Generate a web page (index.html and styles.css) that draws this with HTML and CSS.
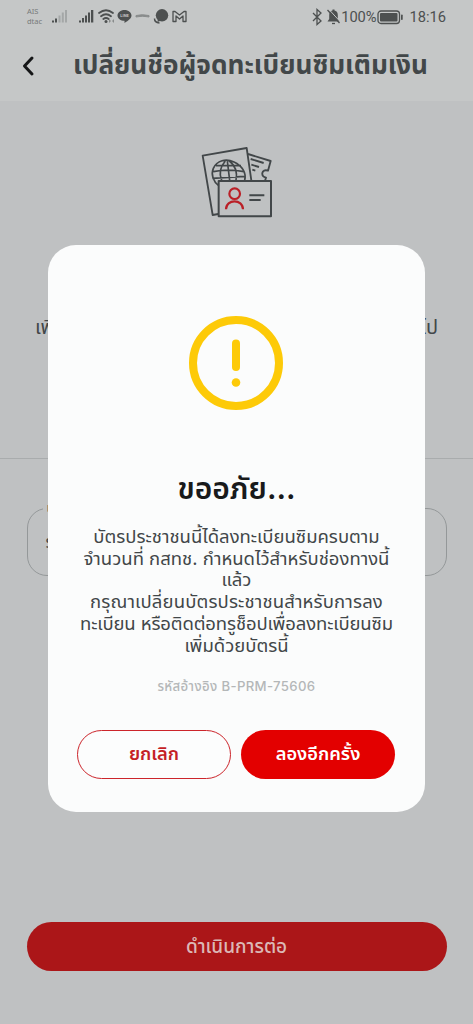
FILE: index.html
```html
<!DOCTYPE html>
<html lang="th">
<head>
<meta charset="utf-8">
<title>เปลี่ยนชื่อผู้จดทะเบียนซิมเติมเงิน</title>
<link rel="stylesheet" href="styles.css">
</head>
<body>
<div class="screen">
  <header class="top">
    <div class="status">
      <div class="carriers"><span>AIS</span><span>dtac</span></div>
      <svg class="status-icons" width="140" height="20" viewBox="0 0 140 20" fill="#4d5050">
        <path d="M4 14.500h2v2H4zM7 12.500h2v4h-2z"/>
        <path d="M10.500 9.500h2v7h-2zM13.800 6.500h2v10h-2zM17 4h2v12.500h-2z" fill="#a4a7a7"/>
        <path d="M31 14.500h2v2h-2zM34 12h2v4.500h-2zM37 9.500h2v7h-2zM40 6.500h2v10h-2zM43 4h2.300v12.500h-2.300z"/>
        <g fill="none" stroke="#4d5050" stroke-width="1.800" stroke-linecap="round"><path d="M51 7q7-5.500 14 0M53 10.200q5-4 10 0M55.300 13q2.700-2 5.400 0"/></g>
        <circle cx="58" cy="15.500" r="1.500"/><path d="M61 13l2 2-2 2zM66 13l-2 2 2 2z" fill="#888b8b"/>
        <path d="M76.500 4c4 0 7 2.500 7 5.500 0 2.700-3 5-7 7.500v-2.200c-4 0-7-2.300-7-5.300S72.500 4 76.500 4z"/>
        <text class="line-logo" x="76.500" y="11" text-anchor="middle">LINE</text>
        <path d="M88 11V9.500q6-1.500 13 0V11l-3-.4q-4-.7-7 0z" fill="#898c8c" stroke="#898c8c"/>
        <circle cx="114" cy="9.300" r="6.200"/><path d="M110 12l-.5 4 5-2z"/><path d="M106.500 12.500q0 4 5 4.500" fill="none" stroke="#4d5050" stroke-width="1.500"/>
        <path d="M125 15.500v-10h2l4.500 3.500 4.500-3.500h2v10h-3v-5.500l-3.500 3-3.500-3v5.500z" fill="none" stroke="#4d5050" stroke-width="1.300" stroke-linejoin="round"/>
      </svg>
      <div class="status-right">
        <svg width="30" height="18" viewBox="0 0 30 18" fill="none" stroke="#4d5050" stroke-width="1.300">
          <path d="M2 5l8 8-4 3.500V1.500L10 5l-8 8"/>
          <path d="M16.500 13.500h12l-1.700-2.500V7c0-3-1.500-4-3.300-4.500V1.500h-2V2.500C19.500 3 18.200 4.500 18.200 7v4z" fill="#4d5050" stroke="none"/><path d="M21 15.500h3"/>
          <path d="M18 1.500l11 12" stroke="#c5c7c7" stroke-width="1"/><path d="M16.500 2l12 13"/>
        </svg>
        <span class="percent">100%</span>
        <svg class="battery" width="27" height="15" viewBox="0 0 27 15"><rect x="1" y="1" width="21.500" height="12.500" rx="3" fill="none" stroke="#4d5050" stroke-width="1.300"/><rect x="3" y="3" width="17.500" height="8.500" rx="1" fill="#4d5050"/><rect x="24" y="4.500" width="1.700" height="5.500" rx=".8" fill="#4d5050"/></svg>
        <span class="time">18:16</span>
      </div>
    </div>
    <div class="nav">
      <svg class="back" width="14" height="22" viewBox="0 0 14 22"><path d="M11 3L3.500 11 11 19" fill="none" stroke="#151617" stroke-width="3" stroke-linecap="round" stroke-linejoin="round"/></svg>
      <h1 class="title">เปลี่ยนชื่อผู้จดทะเบียนซิมเติมเงิน</h1>
    </div>
  </header>
  <main class="content">
    <svg class="id-art" width="95" height="95" viewBox="0 0 285 285" fill="none" stroke="#424749" stroke-width="5.500" stroke-linejoin="round">
      <path d="M85 237l-17 3L38 62l132-23 14 97"/>
      <path d="M174 57l68 21-8 29c-9-3-16 0-17 7s3 12 11 14l-3 9M182 72l39 12M184 89l23 7M187 104l9 3"/>
      <g stroke-width="5"><path d="M86 152C70 140 62 118 70 100c11-24 38-30 62-19 24 11 38 32 32 55M70 110q44-9 92 0M78 92q36-1 75 0M67 130l96-6M106 78Q82 105 95 136M118 78Q145 98 138 136M112 78l7 58"/></g>
      <path d="M86 138h157v106H86z" stroke-width="6"/>
      <g stroke="#ba2027" stroke-width="6.500"><circle cx="134" cy="176" r="16"/><path d="M108 223c0-32 51-32 51 0"/></g>
      <path d="M178 181h45M178 195h34" stroke-width="6"/>
    </svg>
    <div class="notice"><span>เพิ่ม</span><span>ไป</span></div>
    <hr class="rule">
    <fieldset class="field"><legend>เ</legend><span>ร</span></fieldset>
    <button class="proceed">ดำเนินการต่อ</button>
  </main>
  <section class="dialog" role="dialog">
    <svg class="warn" width="96" height="96" viewBox="0 0 96 96"><circle cx="48" cy="48" r="43" fill="none" stroke="#fdca08" stroke-width="8"/><path d="M48 28.500v23.500" stroke="#fdca08" stroke-width="8" stroke-linecap="round"/><circle cx="48" cy="67.500" r="4.300" fill="#fdca08"/></svg>
    <h2 class="heading">ขออภัย...</h2>
    <div class="message">
      <span class="l1">บัตรประชาชนนี้ได้ลงทะเบียนซิมครบตาม</span>
      <span class="l2">จำนวนที่ กสทช. กำหนดไว้สำหรับช่องทางนี้</span>
      <span class="l3">แล้ว</span>
      <span class="l4">กรุณาเปลี่ยนบัตรประชาชนสำหรับการลง</span>
      <span class="l5">ทะเบียน หรือติดต่อทรูช็อปเพื่อลงทะเบียนซิม</span>
      <span class="l6">เพิ่มด้วยบัตรนี้</span>
    </div>
    <p class="reference">รหัสอ้างอิง B-PRM-75606</p>
    <div class="actions"><button class="cancel">ยกเลิก</button><button class="retry">ลองอีกครั้ง</button></div>
  </section>
</div>
</body>
</html>
```
FILE: styles.css
```css
* { box-sizing: border-box; }
body { margin: 0; font-family: Inter, "Noto Sans Thai", "Noto Sans", "Loma", sans-serif; color: #424749; }
button { font: inherit; padding: 0; border: 0; white-space: nowrap; }
svg { display: block; flex: none; }
.screen { position: relative; width: 473px; height: 1024px; overflow: hidden; display: flex; flex-direction: column; background: #bfc1c2; }
.top { height: 101px; background: #c5c7c7; }
.status { height: 34px; padding: 6px 27px 0 27px; display: flex; align-items: flex-start; }
.carriers { width: 21px; display: flex; flex-direction: column; font: 7.5px/10px "Noto Sans", sans-serif; color: #777a7a; }
.line-logo { font: bold 4px Roboto, sans-serif; fill: #c5c7c7; }
.status-right { margin-left: auto; display: flex; align-items: center; height: 22px; font: 14.7px/20px Roboto, sans-serif; color: #4d5050; }
.percent { letter-spacing: -.1px; }
.battery { margin-left: 1px; }
.time { margin-left: 5px; }
.nav { height: 64px; display: flex; align-items: center; padding-left: 21px; }
.title { margin: -3px 0 0 38px; width: 354px; font-size: 26.2px; line-height: 40px; font-weight: 700; white-space: nowrap; }
.content { flex: 1; display: flex; flex-direction: column; align-items: center; }
.id-art { margin: 34px 0 0 2px; }
.notice { width: 403px; height: 40px; margin-top: 77px; display: flex; justify-content: space-between; font-size: 20px; line-height: 40px; }
.rule { width: 100%; height: 1px; border: 0; margin: 111px 0 1px; background: #a9acad; }
.field { width: 420px; height: 75px; margin: 41px 0 0; padding: 0 0 0 15px; border: 1px solid #949899; border-radius: 20px; }
.field legend { height: 14px; padding: 0 4px; font-size: 12px; line-height: 14px; }
.field span { display: block; padding: 12px 0 0 3px; font-size: 17px; line-height: 30px; }
.proceed { width: 420px; height: 49px; margin-top: 346px; padding-top: 2px; border-radius: 25px; background: #ab1618; color: #dcb8b6; font-size: 19px; font-weight: 500; }
.dialog { position: absolute; left: 48px; top: 245px; width: 377px; height: 567px; border-radius: 28px; background: #fbfcfc; display: flex; flex-direction: column; align-items: center; }
.warn { margin: 70px 1px 0 0; }
.heading { margin: 55px 0 0; height: 44px; font-size: 30px; line-height: 44px; font-weight: 600; color: #181a1b; white-space: nowrap; }
.message { margin-top: 16px; display: flex; flex-direction: column; align-items: center; font-size: 18.5px; line-height: 21.7px; white-space: nowrap; }
.l4 { letter-spacing: .15px; }
.l5 { letter-spacing: -.12px; }
.reference { margin: 19px 0 0; height: 22px; line-height: 22px; font-size: 13.2px; letter-spacing: .35px; font-weight: 500; color: #b4b7b8; white-space: nowrap; }
.actions { margin: 33px 1px 0 0; display: flex; gap: 10px; }
.cancel, .retry { width: 154px; height: 49px; border-radius: 25px; font-size: 18.3px; font-weight: 600; }
.cancel { border: 1px solid #cc252b; background: #fcfdfd; color: #c51f26; }
.retry { background: #e30000; color: #fff; }
```
